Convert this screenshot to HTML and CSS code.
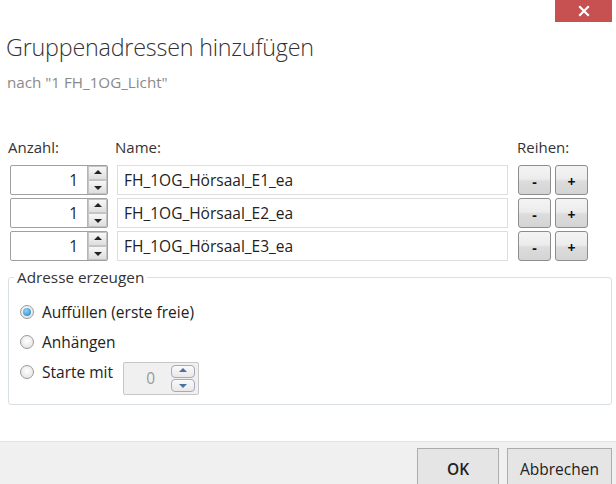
FILE: index.html
```html
<!DOCTYPE html>
<html lang="de">
<head>
    <meta charset="UTF-8">
    <title>Gruppenadressen hinzufügen</title>
    <link rel="stylesheet" href="styles.css">
</head>
<body>
    <div class="dialog">
        <div class="titlebar">
            <button class="close">
                <svg width="12" height="12" viewBox="0 0 12 12"><path d="M2 2 L10 10 M10 2 L2 10" stroke="#fff" stroke-width="2.2" stroke-linecap="square"/></svg>
            </button>
        </div>

        <h1 class="title">Gruppenadressen hinzufügen</h1>
        <p class="subtitle">nach "1 FH_1OG_Licht"</p>

        <div class="table">
            <div class="head">
                <span class="col-count">Anzahl:</span>
                <span class="col-name">Name:</span>
                <span class="col-rows">Reihen:</span>
            </div>

            <div class="row">
                <div class="spin">
                    <span class="spin-value">1</span>
                    <div class="spin-buttons">
                        <span class="arrow up"></span>
                        <span class="arrow down"></span>
                    </div>
                </div>
                <div class="name">FH_1OG_Hörsaal_E1_ea</div>
                <div class="row-buttons">
                    <button class="small">-</button>
                    <button class="small">+</button>
                </div>
            </div>
            <div class="row">
                <div class="spin">
                    <span class="spin-value">1</span>
                    <div class="spin-buttons">
                        <span class="arrow up"></span>
                        <span class="arrow down"></span>
                    </div>
                </div>
                <div class="name">FH_1OG_Hörsaal_E2_ea</div>
                <div class="row-buttons">
                    <button class="small">-</button>
                    <button class="small">+</button>
                </div>
            </div>
            <div class="row">
                <div class="spin">
                    <span class="spin-value">1</span>
                    <div class="spin-buttons">
                        <span class="arrow up"></span>
                        <span class="arrow down"></span>
                    </div>
                </div>
                <div class="name">FH_1OG_Hörsaal_E3_ea</div>
                <div class="row-buttons">
                    <button class="small">-</button>
                    <button class="small">+</button>
                </div>
            </div>
        </div>

        <fieldset class="group">
            <legend>Adresse erzeugen</legend>
            <label class="option"><span class="radio checked"></span>Auffüllen (erste freie)</label>
            <label class="option"><span class="radio"></span>Anhängen</label>
            <label class="option">
                <span class="radio"></span>Starte mit
                <span class="spin disabled">
                    <span class="spin-value">0</span>
                    <span class="spin-buttons">
                        <span class="arrow up"></span>
                        <span class="arrow down"></span>
                    </span>
                </span>
            </label>
        </fieldset>

        <div class="footer">
            <button class="btn ok">OK</button>
            <button class="btn">Abbrechen</button>
        </div>
    </div>
</body>
</html>
```

FILE: styles.css
```css
* {
    box-sizing: border-box;
    margin: 0;
    padding: 0;
}

body {
    font-family: "Open Sans", "Noto Sans", sans-serif;
    background-color: #fff;
    color: #222;
    width: 616px;
    height: 484px;
    overflow: hidden;
}

.dialog {
    display: flex;
    flex-direction: column;
    height: 484px;
}

.dialog > * {
    flex-shrink: 0;
}

.titlebar {
    display: flex;
    justify-content: flex-end;
    height: 22px;
    padding-right: 4px;
}

.close {
    width: 57px;
    height: 22px;
    border: none;
    background-color: #c75050;
    display: flex;
    align-items: center;
    justify-content: center;
}

.title {
    font-size: 23.3px;
    font-weight: 300;
    line-height: 30px;
    color: #333;
    margin: 10px 0 0 6px;
    letter-spacing: -0.2px;
}

.subtitle {
    font-size: 15.2px;
    line-height: 18px;
    color: #8a8a8a;
    margin: 11px 0 0 7px;
}

.table {
    margin: 47px 0 0 0;
    padding-left: 8px;
}

.head {
    display: flex;
    font-size: 15px;
    line-height: 18px;
    color: #333;
    margin-bottom: 9px;
}

.col-count {
    width: 107px;
}

.col-name {
    width: 402px;
}

.row {
    display: flex;
    align-items: center;
    height: 30px;
    margin-bottom: 3px;
    padding-left: 2px;
}

.spin {
    display: flex;
    width: 98px;
    height: 30px;
    border: 1px solid #a0a0a0;
    border-radius: 2px;
    background-color: #fff;
}

.spin-value {
    flex: 1;
    text-align: right;
    font-size: 15.5px;
    line-height: 28px;
    padding-right: 9px;
    color: #222;
}

.spin-buttons {
    display: flex;
    flex-direction: column;
    width: 20px;
    border-left: 1px solid #b5b5b5;
}

.arrow {
    flex: 1;
    position: relative;
    background: linear-gradient(#f7f7f7, #dedede);
    border: 1px solid #c4c4c4;
}

.arrow::after {
    content: "";
    position: absolute;
    left: 50%;
    top: 50%;
    margin-left: -4px;
    border-left: 4px solid transparent;
    border-right: 4px solid transparent;
}

.arrow.up::after {
    margin-top: -3px;
    border-bottom: 4px solid #222;
}

.arrow.down::after {
    margin-top: -1px;
    border-top: 4px solid #222;
}

.name {
    width: 391px;
    height: 30px;
    margin-left: 9px;
    border: 1px solid #dedede;
    font-size: 15.5px;
    line-height: 28px;
    padding-left: 6px;
    color: #222;
}

.row-buttons {
    display: flex;
    gap: 4px;
    margin-left: 10px;
}

.small {
    width: 33px;
    height: 30px;
    border: 1px solid #8d8d8d;
    border-radius: 3px;
    background: linear-gradient(#f4f4f4 0%, #ececec 45%, #dcdcdc 55%, #d4d4d4 100%);
    font-family: "Open Sans", sans-serif;
    font-size: 14px;
    font-weight: 700;
    color: #111;
    padding-top: 2px;
}

.group {
    margin: 4px 4px 0 8px;
    height: 137px;
    border: 1px solid #d9e0e4;
    border-radius: 3px;
    padding: 11px 0 0 11px;
}

.group legend {
    font-size: 15.3px;
    line-height: 18px;
    padding: 0 3px;
    margin-left: -6px;
    color: #333;
}

.option {
    display: flex;
    align-items: center;
    font-size: 15.5px;
    line-height: 18px;
    color: #222;
    height: 30px;
}

.radio {
    width: 14px;
    height: 14px;
    border-radius: 50%;
    border: 1px solid #9a9a9a;
    background: radial-gradient(circle at 50% 40%, #fff, #dedede);
    margin-right: 8px;
    position: relative;
}

.radio.checked::after {
    content: "";
    position: absolute;
    left: 2px;
    top: 2px;
    width: 8px;
    height: 8px;
    border-radius: 50%;
    background: radial-gradient(circle at 40% 35%, #8fd3f5, #1b7fbf);
}

.spin.disabled {
    width: 76px;
    height: 33px;
    margin-left: 10px;
    margin-top: 12px;
    background-color: #f0f0f0;
    border-color: #c6c6c6;
}

.spin.disabled .spin-value {
    color: #9a9a9a;
    line-height: 31px;
    padding-right: 16px;
}

.spin.disabled .spin-buttons {
    width: 27px;
    border-left: none;
    padding: 2px 3px 2px 0;
    gap: 1px;
}

.spin.disabled .arrow {
    background: linear-gradient(#fafafa, #e8e8e8);
    border-color: #a8a8c0;
    border-radius: 4px;
}

.spin.disabled .arrow.up::after {
    border-bottom-color: #4a6fa5;
}

.spin.disabled .arrow.down::after {
    border-top-color: #4a6fa5;
}

.footer {
    margin-top: 36px;
    flex: 1 1 0;
    min-height: 0;
    overflow: hidden;
    background-color: #f0f0f0;
    border-top: 1px solid #e2e2e2;
    display: flex;
    justify-content: flex-end;
    gap: 8px;
    padding: 6px 4px 0 0;
}

.btn {
    height: 42px;
    flex-shrink: 0;
    border: 1px solid #adadad;
    background-color: #e5e5e5;
    font-family: "Open Sans", sans-serif;
    font-size: 15.5px;
    color: #222;
    padding-bottom: 0;
    width: 105px;
}

.btn.ok {
    width: 82px;
    font-weight: 600;
}
```
